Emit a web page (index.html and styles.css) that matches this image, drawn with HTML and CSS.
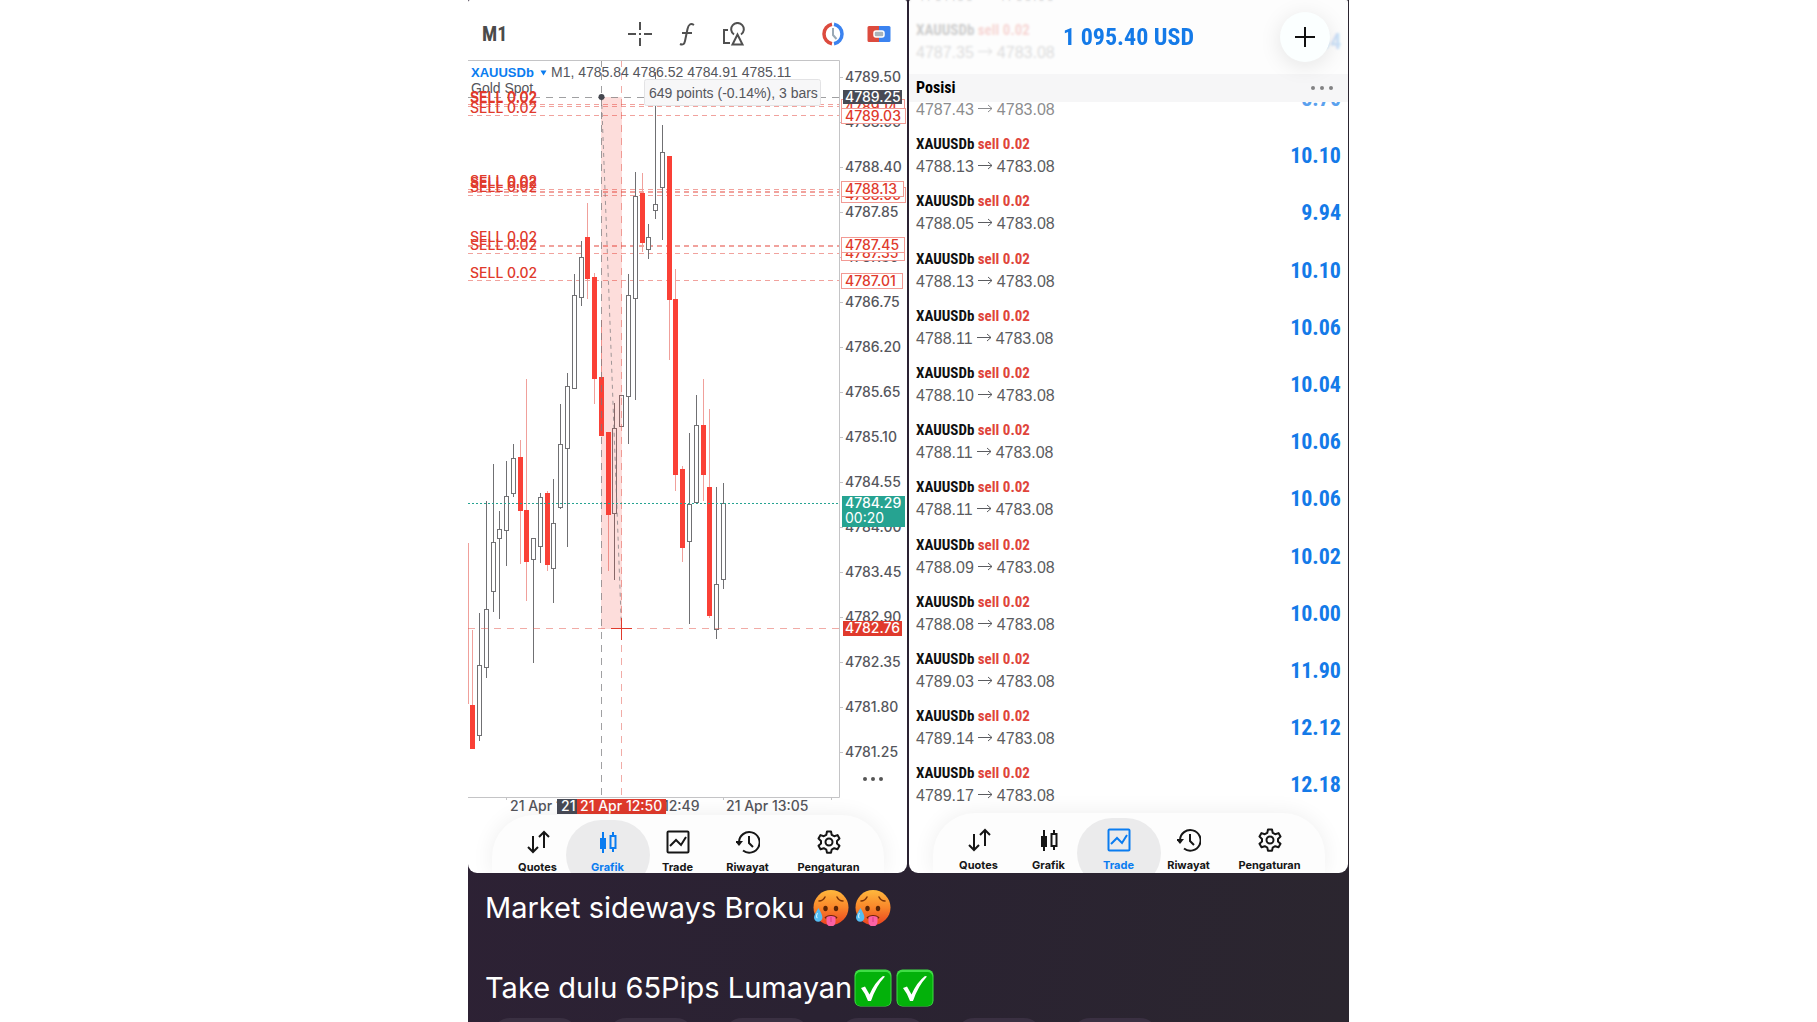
FILE: index.html
```html
<!DOCTYPE html>
<html lang="id">
<head>
<meta charset="utf-8">
<meta name="viewport" content="width=device-width, initial-scale=1">
<title>Market sideways Broku</title>
<link rel="stylesheet" href="styles.css">
</head>
<body>
<svg class="defs" aria-hidden="true">
  <symbol id="i-quotes" viewBox="0 0 24 24"><path d="M7 6v16M2 17l5 5 5-5M18 18V2M13 7l5-5 5 5" fill="none" stroke="currentColor" stroke-width="2"/></symbol>
  <symbol id="i-chart" viewBox="0 0 24 24"><path d="M7 2v21M17 2v4M17 18v4" stroke="currentColor" stroke-width="2"/><path d="M4 8h6v11H4z" fill="currentColor"/><path d="M14.500 6h5v12h-5z" fill="none" stroke="currentColor" stroke-width="2"/></symbol>
  <symbol id="i-trade" viewBox="0 0 24 24"><rect x="1.500" y="1.500" width="21" height="21" rx="1" fill="none" stroke="currentColor" stroke-width="2"/><path d="M4 16l6-6 5 5 5-8" fill="none" stroke="currentColor" stroke-width="2"/></symbol>
  <symbol id="i-history" viewBox="0 0 24 24"><path d="M3 12A10.300 10.300 0 1 1 7 20.500M13 6v7l4 4" fill="none" stroke="currentColor" stroke-width="2"/><path d="M-1 11h8l-4 5z" fill="currentColor"/></symbol>
  <symbol id="i-gear" viewBox="0 0 24 24"><path d="M10 1.500h4l.7 3.300 2.500 1.400 3.300-1.100 2 3.500-2.500 2.300v2.600l2.500 2.300-2 3.500-3.300-1.100-2.500 1.400-.7 3.200h-4l-.7-3.200-2.500-1.400-3.300 1.100-2-3.500L4 13.500v-2.600L1.500 8.600l2-3.500 3.300 1.100 2.500-1.400z" fill="none" stroke="currentColor" stroke-width="2" stroke-linejoin="round"/><circle cx="12" cy="12" r="3.500" fill="none" stroke="currentColor" stroke-width="2"/></symbol>
  <symbol id="e-hot" viewBox="0 0 36 36">
    <circle cx="18" cy="17.500" r="17.500" fill="url(#hot)"/>
    <path d="M6 11q4 0 6-4M30 11q-4 0-6-4" fill="none" stroke="#7a3308" stroke-width="1.500" stroke-linecap="round"/>
    <ellipse cx="12.500" cy="18.500" rx="2.200" ry="2.700" fill="#5b2505"/><ellipse cx="23" cy="18.500" rx="2.200" ry="2.700" fill="#5b2505"/>
    <path d="M12 28q6-4 12 0" fill="none" stroke="#6b2206" stroke-width="2"/>
    <path d="M13.500 27q4.500-2 9 0v5a4.500 4.500 0 0 1-9 0z" fill="#fb62a4"/><path d="M18 27v5" stroke="#d93c80"/>
    <path d="M5.500 18Q1 25 1 27.500a4.200 4.200 0 0 0 8.400 0Q9.500 25 5.500 18z" fill="#55bdf2"/><path d="M4.500 23q-2 4 0 5" fill="none" stroke="#c9efff" stroke-width="1.200"/>
  </symbol>
  <symbol id="e-check" viewBox="0 0 38 38"><rect x=".5" y=".5" width="37" height="37" rx="6" fill="#3fdd45"/><rect x="1.500" y="3" width="35" height="34" rx="5" fill="#03b10a"/><path d="M7 19l4-1.500 4.500 8Q21 13 29 7l2 .5Q22 17 17 32h-3Q11 24 7 19z" fill="#fff"/></symbol>
  <linearGradient id="hot" x1="0" y1="0" x2="0" y2="1"><stop offset="0" stop-color="#ffb83d"/><stop offset=".5" stop-color="#f9862a"/><stop offset="1" stop-color="#ea4220"/></linearGradient>
</svg>

<main class="post">
  <div class="shots">
    <section class="panel" aria-label="Grafik">
      <header class="toolbar">
        <button class="timeframe">M1</button>
        <div class="tools">
          <button aria-label="Crosshair"><svg viewBox="0 0 24 24"><path d="M12 0v8M12 16v8M0 12h8M16 12h8M11 12h2" fill="none" stroke="#505050" stroke-width="2"/></svg></button>
          <button aria-label="Indikator"><svg viewBox="0 0 24 24"><path d="M19 3q-5-3-6.500 4L10 19q-1 5-5 3M7 11h10" fill="none" stroke="#505050" stroke-width="2"/></svg></button>
          <button aria-label="Objek"><svg viewBox="0 0 24 24"><path d="M6 8H2v13h6M12 12.500a6.300 6.300 0 1 1 7 0M15.500 12.500l-5 10h10z" fill="none" stroke="#505050" stroke-width="2"/></svg></button>
        </div>
        <div class="modes">
          <button aria-label="Waktu"><svg viewBox="0 0 24 24"><path d="M11 2.200a10 10 0 0 0 0 19.600" fill="none" stroke="#dc4b3e" stroke-width="3.500"/><path d="M13 2.200a10 10 0 0 1 0 19.600" fill="none" stroke="#3b83f0" stroke-width="3.500"/><path d="M12 6v7l3.500 4" fill="none" stroke="#9aa9b5" stroke-width="2"/></svg></button>
          <button aria-label="Satu klik"><svg viewBox="0 0 24 24"><path d="M12 4H2a1.500 1.500 0 0 0-1.500 1.500v13A1.500 1.500 0 0 0 2 20h10z" fill="#dc4b3e"/><path d="M12 4h10a1.500 1.500 0 0 1 1.500 1.500v13A1.500 1.500 0 0 1 22 20H12z" fill="#3b83f0"/><rect x="7" y="9" width="10" height="6" rx="2" fill="#a9b3bb" stroke="#fff" stroke-width="1.500"/></svg></button>
        </div>
      </header>
      <svg class="chart" viewBox="0 60 439 752" role="img" aria-label="XAUUSDb M1">
        <g id="levels"></g>
        <g id="candles"></g>
        <rect x="133" y="97" width="21" height="532" class="range"/>
        <path d="M133.500 97L153.500 629" class="dash gray"/>
        <path d="M133.500 60V797" class="dash-long gray"/>
        <path d="M153.500 60V797M0 628.500H371" class="dash-long rose"/>
        <path d="M0 97.500H371" class="dash-long gray"/>
        <path d="M0 503.500H371" class="now"/>
        <path d="M143 628.500h21M153.500 618v22" class="cross"/>
        <circle cx="133.500" cy="97" r="3" fill="#45474f"/>
        <path d="M0 60.500H371.500V797.500H0M38.500 797v3M255.500 797v3M363.500 797v3" class="frame"/>
        <g id="prices"></g>
        <text x="3" y="77" class="info symbol">XAUUSDb</text>
        <path d="M72.500 70.500h6l-3 5z" fill="#0a7cf0"/>
        <text x="83" y="77" class="info">M1, 4785.84 4786.52 4784.91 4785.11</text>
        <text x="3" y="93" class="info">Gold Spot</text>
        <g id="orders"></g>
        <rect x="176.500" y="79.500" width="176" height="26" rx="2" class="tip"/>
        <text x="181" y="98" class="info">649 points (-0.14%), 3 bars</text>
        <g fill="#555"><circle cx="397" cy="779" r="2"/><circle cx="405" cy="779" r="2"/><circle cx="413" cy="779" r="2"/></g>
        <g class="times">
          <text x="42" y="811">21 Apr 12:33</text><text x="149" y="811">21 Apr 12:49</text><text x="258" y="811">21 Apr 13:05</text>
          <rect x="89" y="799" width="22" height="15" fill="#474a55"/><text x="93" y="811" fill="#fff">21</text>
          <rect x="109" y="799" width="89" height="15" fill="#e03a2c"/><text x="112" y="811" class="light">21 Apr 12:50</text>
        </g>
      </svg>
      <nav class="tabs tabs-chart">
        <a href="#quotes"><svg><use href="#i-quotes"/></svg>Quotes</a>
        <a href="#grafik" class="active"><svg><use href="#i-chart"/></svg>Grafik</a>
        <a href="#trade"><svg><use href="#i-trade"/></svg>Trade</a>
        <a href="#riwayat"><svg><use href="#i-history"/></svg>Riwayat</a>
        <a href="#pengaturan"><svg><use href="#i-gear"/></svg>Pengaturan</a>
      </nav>
    </section>

    <section class="panel" aria-label="Trade">
      <header class="account">
        <div class="balance">
          <h1>1 095.40 USD</h1>
          <button class="add" aria-label="Order baru"><svg viewBox="0 0 24 24"><path d="M12 2v20M2 12h20" stroke="#111" stroke-width="2"/></svg></button>
        </div>
        <div class="section-bar">
          <h2>Posisi</h2>
          <button class="more" aria-label="Opsi"><svg viewBox="0 0 24 6" fill="#828284"><circle cx="3" cy="3" r="2"/><circle cx="12" cy="3" r="2"/><circle cx="21" cy="3" r="2"/></svg></button>
        </div>
      </header>
      <ul class="positions" id="positions"></ul>
      <nav class="tabs">
        <a href="#quotes"><svg><use href="#i-quotes"/></svg>Quotes</a>
        <a href="#grafik"><svg><use href="#i-chart"/></svg>Grafik</a>
        <a href="#trade" class="active"><svg><use href="#i-trade"/></svg>Trade</a>
        <a href="#riwayat"><svg><use href="#i-history"/></svg>Riwayat</a>
        <a href="#pengaturan"><svg><use href="#i-gear"/></svg>Pengaturan</a>
      </nav>
    </section>
  </div>

  <div class="caption">
    <p>Market sideways Broku <svg role="img" aria-label="hot face"><use href="#e-hot"/></svg><svg role="img" aria-label="hot face"><use href="#e-hot"/></svg></p>
    <p>Take dulu 65Pips Lumayan<svg class="check" role="img" aria-label="check"><use href="#e-check"/></svg><svg class="check" role="img" aria-label="check"><use href="#e-check"/></svg></p>
  </div>
  <div class="reactions"><span></span><span></span><span></span><span></span><span></span><span></span></div>
</main>
<script src="app.js"></script>
</body>
</html>
```
FILE: styles.css
```css
* { box-sizing: border-box; }
body { margin: 0; background: #fff; font-family: Inter, "Liberation Sans", sans-serif; overflow: hidden; }
button { border: 0; padding: 0; background: none; font: inherit; color: inherit; cursor: pointer; }
a { color: inherit; text-decoration: none; }
svg { display: block; }
h1, h2, p, ul { margin: 0; padding: 0; }
.defs { position: absolute; width: 0; height: 0; }

.post { max-width: 881px; height: 100vh; margin: 0 auto; overflow: hidden; background: linear-gradient(100deg, #2e2135 0%, #2a2232 50%, #2b262f 100%); }
.shots { display: grid; grid-template-columns: 1fr 1fr; gap: 2px; padding-right: 1px; }
.panel { position: relative; overflow: hidden; display: flex; flex-direction: column; background: #fff; border-radius: 2px 2px 9px 9px; }

.toolbar { display: flex; align-items: center; height: 60px; padding: 8px 16px 0 14px; color: #4b4b4b; }
.toolbar svg { width: 24px; height: 24px; }
.timeframe { width: 146px; text-align: left; font: 700 20px/24px "Liberation Sans Narrow", "Roboto Condensed", Roboto, sans-serif; }
.tools { display: flex; gap: 23px; flex: 1; }
.modes { display: flex; gap: 22px; }

.chart { width: 100%; overflow: visible; font-family: Inter, sans-serif; font-size: 14px; }
.frame { fill: none; stroke: #c4c4c6; }
.range { fill: #f2453a; fill-opacity: .18; }
.dash, .dash-long, .now { fill: none; }
.dash { stroke-dasharray: 4 4; }
.dash-long { stroke-dasharray: 7 6; }
.gray { stroke: #77777a; stroke-opacity: .7; }
.rose { stroke: #e4574e; stroke-opacity: .5; }
.now { stroke: #26a391; stroke-dasharray: 2 2; }
.cross { stroke: #e03a2c; }
.level { stroke: #e4453b; stroke-opacity: .5; stroke-dasharray: 5 4; }
.level.thick { stroke-width: 2; }
.up { fill: #fff; stroke: #707073; }
.up-wick { stroke: #707073; }
.down { fill: #fa4036; }
.down-wick { stroke: #f0a09b; }
.info { font-family: "Liberation Sans", Arial, sans-serif; font-size: 14px; fill: #55565c; }
.info.symbol { font-size: 13px; fill: #0a7cf0; font-weight: 700; }
.order { fill: #e03a2c; font-weight: 500; }
.price { fill: #55565c; font-weight: 500; }
.price.red { fill: #e03a2c; }
.price.light, .times .light { fill: #fff; }
.price.thin { fill: #fff; font-weight: 400; }
.tag { fill: #fff; stroke: #f29a94; }
.times { font-size: 14px; font-weight: 500; fill: #55565c; }
.tip { fill: #f7f7f8; stroke: #e3e3e5; }

.tabs { position: relative; display: grid; grid-template-columns: repeat(4, 70px) 92px; align-self: center; width: 392px; height: 60px; margin-top: -1px; padding: 5px 8px 0 11px; overflow: hidden; border-radius: 42px 42px 0 0; background: #fdfdfd; box-shadow: 0 0 22px rgba(0, 0, 0, .07); color: #161616; font-size: 11px; font-weight: 700; }
.tabs-chart { height: 58px; margin-top: 3px; }
.tabs a { position: relative; display: flex; flex-direction: column; align-items: center; gap: 5px; padding-top: 10px; line-height: 16px; }
.tabs svg { position: relative; width: 24px; height: 24px; overflow: visible; }
.tabs .active { color: #0a7cf0; isolation: isolate; }
.tabs .active::before { content: ""; position: absolute; z-index: -1; top: 0; left: -7px; right: -7px; height: 70px; border-radius: 36px; background: #ebebec; }

.account { position: absolute; z-index: 1; inset: 0 0 auto; }
.balance { display: grid; place-items: center; height: 74px; background: rgba(252, 252, 252, .7); backdrop-filter: blur(1px); }
.balance h1 { font: 700 24px/74px "Liberation Sans Narrow", "Roboto Condensed", Roboto, sans-serif; color: #147ae8; }
.add { position: absolute; top: 12px; right: 18px; display: grid; place-items: center; width: 50px; height: 50px; border-radius: 50%; background: #fbffff; box-shadow: 0 4px 22px rgba(0, 0, 0, .1); }
.add svg { width: 24px; height: 24px; }
.section-bar { display: flex; align-items: center; justify-content: space-between; height: 28px; padding: 0 14px 0 7px; background: #f6f6f7; }
.section-bar h2 { font: 700 16px/28px "Liberation Sans Narrow", "Roboto Condensed", Roboto, sans-serif; }
.more svg { width: 24px; height: 6px; }

.positions { display: grid; grid-auto-rows: 1fr; height: 858px; list-style: none; margin-top: -44px; }
.positions li { display: flex; align-items: center; justify-content: space-between; padding: 0 7px; }
.deal { font: 700 15px/22px "Liberation Sans Narrow", "Roboto Condensed", Roboto, sans-serif; color: #111; }
.deal span { color: #e0443a; }
.quote { font: 16px/24px "Liberation Sans", Arial, sans-serif; color: #5b5c60; }
.quote svg { display: inline-block; width: 15px; height: 9px; margin: 0 4px 2px; }
.profit { font: 700 22px/28px "Liberation Sans Narrow", "Roboto Condensed", Roboto, sans-serif; color: #147ae8; }
.scrolled { opacity: .7; }

.caption { display: grid; gap: 40px; padding: 15px 17px 0; color: #fff; font-size: 29px; line-height: 40px; }
.caption p { display: flex; align-items: center; white-space: pre; }
.caption svg { width: 36px; height: 36px; margin-right: 6px; }
.caption .check { width: 38px; height: 38px; margin: 0 2px; }
.reactions { display: flex; gap: 30px; padding: 10px 24px 0; }
.reactions span { width: 86px; height: 36px; border-radius: 18px; background: #3a3042; }
```
FILE: app.js
```js
const NS = 'http://www.w3.org/2000/svg';
function draw(parent, name, attrs, text) {
  const el = document.createElementNS(NS, name);
  for (const key in attrs) el.setAttribute(key, attrs[key]);
  if (text) el.textContent = text;
  parent.appendChild(el);
}
const byId = id => document.getElementById(id);

// direction, high, body top, body bottom, low
const candles = [
  ['d',630,705,749,749],['u',613,665,736,741],['u',501,609,668,678],['u',464,542,592,612],
  ['u',511,529,539,619],['u',461,496,531,566],['u',444,458,494,497],['d',440,457,511,564],
  ['d',379,510,562,601],['u',538,538,560,663],['u',493,497,547,563],['d',491,493,565,571],
  ['u',479,523,569,603],['u',404,444,508,509],['u',373,386,449,547],['u',274,295,389,389],
  ['u',241,257,298,306],['d',203,237,279,299],['d',273,277,379,404],['d',320,377,436,436],
  ['d',432,432,515,571],['u',403,428,514,580],['u',395,395,427,427],['u',274,295,397,444],
  ['u',172,196,299,400],['d',173,193,243,252],['u',224,237,250,259],['u',72,204,211,219],
  ['u',125,152,188,240],['d',156,156,300,360],['d',269,299,475,491],['d',466,469,548,562],
  ['u',433,504,542,624],['u',395,425,503,503],['d',379,425,475,501],['d',409,487,616,618],
  ['u',487,584,630,639],['u',483,503,580,589]
];
draw(byId('candles'), 'path', { d: 'M.5 543V704', class: 'down-wick' });
candles.forEach(([dir, high, top, bottom, low], i) => {
  const x = Math.round(4.2 + i * 6.774) + 0.5;
  const up = dir === 'u';
  draw(byId('candles'), 'path', { d: `M${x} ${high}V${low}`, class: up ? 'up-wick' : 'down-wick' });
  draw(byId('candles'), 'rect', up
    ? { x: x - 2, y: top + 0.5, width: 4, height: bottom - top - 1, class: 'up' }
    : { x: x - 2.5, y: top, width: 5, height: bottom - top, class: 'down' });
});

[[104.5], [106.5], [115.5], [189.5], [192, 1], [195.5], [246, 1], [253.5], [280.5]].forEach(([y, thick]) =>
  draw(byId('levels'), 'path', { d: `M0 ${y}H371`, class: thick ? 'level thick' : 'level' }));
[102, 103, 113, 186, 188, 192, 242, 250, 278].forEach(y =>
  draw(byId('orders'), 'text', { x: 2, y, class: 'order' }, 'SELL 0.02'));

const prices = byId('prices');
for (let i = 0; i < 16; i++) {
  const y = 77 + i * 45;
  draw(prices, 'path', { d: `M372 ${y}.5h3`, class: 'frame' });
  draw(prices, 'text', { x: 377, y: y + 5, class: 'price' }, (4789.5 - i * 0.55).toFixed(2));
}
[['4789.14', 99, 63], ['4789.03', 108, 64], ['4788.05', 187, 64], ['4788.13', 181, 62], ['4787.35', 245, 63], ['4787.45', 237, 63], ['4787.01', 273, 61]].forEach(([label, y, width]) => {
  draw(prices, 'rect', { x: 373.5, y: y + 0.5, width, height: 15, class: 'tag' });
  draw(prices, 'text', { x: 377, y: y + 13, class: 'price red' }, label);
});
[['4789.25', 90, '#474a55', 59, 14], ['4782.76', 621, '#e03a2c', 59, 15], ['4784.29', 496, '#26a391', 63, 31]].forEach(([label, y, fill, width, height]) => {
  draw(prices, 'rect', { x: height > 20 ? 374 : 375, y, width, height, fill });
  draw(prices, 'text', { x: 377, y: y + 12, class: 'price light' }, label);
});
draw(prices, 'text', { x: 377, y: 523, class: 'price thin' }, '00:20');

const positions = [
  ['4787.35', '8.54'], ['4787.35', '8.54'], ['4787.43', '8.70'], ['4788.13', '10.10'], ['4788.05', '9.94'],
  ['4788.13', '10.10'], ['4788.11', '10.06'], ['4788.10', '10.04'], ['4788.11', '10.06'], ['4788.11', '10.06'],
  ['4788.09', '10.02'], ['4788.08', '10.00'], ['4789.03', '11.90'], ['4789.14', '12.12'], ['4789.17', '12.18']
];
byId('positions').innerHTML = positions.map(([open, profit], i) => `
  <li${i < 3 ? ' class="scrolled"' : ''}>
    <div><div class="deal">XAUUSDb <span>sell 0.02</span></div>
    <div class="quote">${open}<svg viewBox="0 0 15 9"><path d="M0 4.500h14M10 1l4 3.500L10 8" fill="none" stroke="#5b5c60"/></svg>4783.08</div></div>
    <div class="profit">${profit}</div>
  </li>`).join('');
```
